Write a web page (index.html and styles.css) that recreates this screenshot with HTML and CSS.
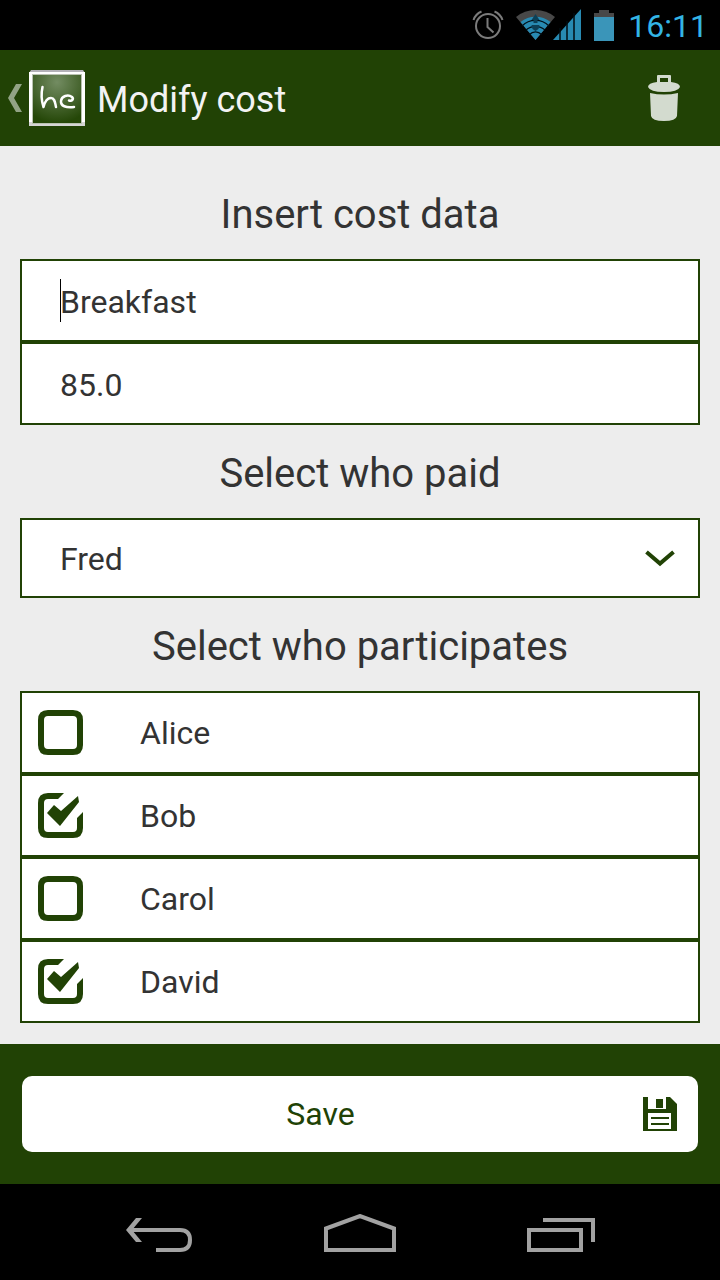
FILE: index.html
```html
<!DOCTYPE html>
<html lang="en">
<head>
<meta charset="utf-8">
<meta name="viewport" content="width=device-width, initial-scale=1">
<title>Modify cost</title>
<link rel="stylesheet" href="styles.css">
</head>
<body>
<div class="status-bar">
  <svg class="alarm-icon" width="34" height="34" viewBox="0 0 34 34" fill="none" stroke="#7b7b7b" stroke-width="2" aria-hidden="true">
    <circle cx="16" cy="18" r="12"/>
    <path d="M15.500 10v9l6 5.500M1.500 12Q3.500 6 9.500 3.500M30.500 12Q28.500 6 22.500 3.500"/>
  </svg>
  <svg class="signal-icons" width="66" height="34" viewBox="0 0 66 34" aria-hidden="true">
    <path d="M0 9A31 31 0 0 1 39 9L19.500 32Z" fill="#484848"/>
    <path d="M4.500 14A24 24 0 0 1 34.500 14L19.500 32Z" fill="#288ab2"/>
    <path d="M6 18A19 19 0 0 1 33 18M10 22A14 14 0 0 1 29 22M13.500 26.500A8 8 0 0 1 25.500 26.500" fill="none" stroke="#001019" stroke-width="1.200"/>
    <path d="M19.500 6l4 6h-2v3h-4v-3h-2zM15.500 17h8l-1 4-3 2-3-2z" fill="#0c4057"/>
    <path d="M37 32L65 1V32Z" fill="#288ab2"/>
    <path d="M44 20V32M51 13V32M58 5V32" stroke="#000c12" stroke-width="1.500"/>
  </svg>
  <svg class="battery-icon" width="20" height="31" viewBox="0 0 20 31" aria-hidden="true">
    <path d="M5 0H15V3H20V7H0V3H5Z" fill="#484848"/>
    <path d="M0 7H20V31H0Z" fill="#3a95b9"/>
  </svg>
  <time class="clock">16:11</time>
</div>

<header class="action-bar">
  <a class="up-link" href="#" aria-label="Back">
    <svg width="14" height="28" viewBox="0 0 14 28" aria-hidden="true"><path d="M8 0H14L6 14L14 28H8L0 14Z" fill="#92a385"/></svg>
    <svg class="logo" width="56" height="56" viewBox="0 0 56 56" aria-hidden="true">
      <defs>
        <radialGradient id="logo-glow" cx="50%" cy="15%" r="85%">
          <stop offset="0" stop-color="#738c62"/>
          <stop offset="1" stop-color="#254708"/>
        </radialGradient>
      </defs>
      <path d="M2 0H54L56 3V56H0V3Z" fill="#b4b2b8"/>
      <path d="M0 2H56V53H0Z" fill="#fff"/>
      <path d="M0 52H56V56H0Z" fill="#d5d5d5"/>
      <path d="M3 4H53V54H3Z" fill="#b9c2b1"/>
      <path d="M4 5H52V53H4Z" fill="url(#logo-glow)"/>
      <path d="M13.500 17C12 24 12.500 31 14.500 37C16 31 19 28 22 28C26 28 26 33 27 37M40 30.500C43 31.500 45 29 43 27C39 24 32.500 26 32 31C31.500 36 37 38 45 37" fill="none" stroke="#fff" stroke-width="2.500" stroke-linecap="round" stroke-linejoin="round"/>
    </svg>
  </a>
  <h1 class="title">Modify cost</h1>
  <button class="icon-button" type="button" aria-label="Delete">
    <svg width="32" height="46" viewBox="0 0 32 46" fill="#d3dbcf" aria-hidden="true">
      <path fill-rule="evenodd" d="M10 0H22Q23 0 23 1V7Q32 8 32 12Q30 17 16 17Q2 17 0 12Q0 8 9 7V1Q9 0 10 0ZM12 3V7H20V3Z"/>
      <path d="M2 18Q16 21 30 18L29 41Q28 46 16 46Q4 46 3 41Z"/>
    </svg>
  </button>
</header>

<form class="cost-form" id="cost-form">
  <h2 class="section-title">Insert cost data</h2>
  <div class="field-group">
    <div class="caret-field">
      <input class="field" type="text" value="Breakfast" aria-label="Cost name">
      <span class="caret"></span>
    </div>
    <input class="field" type="text" inputmode="decimal" value="85.0" aria-label="Amount">
  </div>

  <h2 class="section-title"><label for="payer">Select who paid</label></h2>
  <div class="select-wrap">
    <select class="payer" id="payer">
      <option>Fred</option>
    </select>
    <svg class="chevron" width="30" height="17" viewBox="0 0 30 17" fill="none" stroke="#214205" stroke-width="4" aria-hidden="true"><path d="M1.500 2L15 13.500L28.500 2"/></svg>
  </div>

  <h2 class="section-title">Select who participates</h2>
  <div class="people">
    <label class="person">
      <span class="tick"><input class="tick-input" type="checkbox"><svg class="tick-mark" viewBox="0 0 45 45" aria-hidden="true"><path class="tick-empty" d="M10 3H35Q42 3 42 10V35Q42 42 35 42H10Q3 42 3 35V10Q3 3 10 3Z"/><path class="tick-full" d="M0 10Q0 0 10 0H26L20 6H10Q6 6 6 10V35Q6 39 10 39H35Q39 39 39 35V25L45 19V35Q45 45 35 45H10Q0 45 0 35ZM9 20L16 12L23 18L40 3L41 9L22 33Z"/></svg></span>
      <span>Alice</span>
    </label>
    <label class="person">
      <span class="tick"><input class="tick-input" type="checkbox" checked><svg class="tick-mark" viewBox="0 0 45 45" aria-hidden="true"><path class="tick-empty" d="M10 3H35Q42 3 42 10V35Q42 42 35 42H10Q3 42 3 35V10Q3 3 10 3Z"/><path class="tick-full" d="M0 10Q0 0 10 0H26L20 6H10Q6 6 6 10V35Q6 39 10 39H35Q39 39 39 35V25L45 19V35Q45 45 35 45H10Q0 45 0 35ZM9 20L16 12L23 18L40 3L41 9L22 33Z"/></svg></span>
      <span>Bob</span>
    </label>
    <label class="person">
      <span class="tick"><input class="tick-input" type="checkbox"><svg class="tick-mark" viewBox="0 0 45 45" aria-hidden="true"><path class="tick-empty" d="M10 3H35Q42 3 42 10V35Q42 42 35 42H10Q3 42 3 35V10Q3 3 10 3Z"/><path class="tick-full" d="M0 10Q0 0 10 0H26L20 6H10Q6 6 6 10V35Q6 39 10 39H35Q39 39 39 35V25L45 19V35Q45 45 35 45H10Q0 45 0 35ZM9 20L16 12L23 18L40 3L41 9L22 33Z"/></svg></span>
      <span>Carol</span>
    </label>
    <label class="person">
      <span class="tick"><input class="tick-input" type="checkbox" checked><svg class="tick-mark" viewBox="0 0 45 45" aria-hidden="true"><path class="tick-empty" d="M10 3H35Q42 3 42 10V35Q42 42 35 42H10Q3 42 3 35V10Q3 3 10 3Z"/><path class="tick-full" d="M0 10Q0 0 10 0H26L20 6H10Q6 6 6 10V35Q6 39 10 39H35Q39 39 39 35V25L45 19V35Q45 45 35 45H10Q0 45 0 35ZM9 20L16 12L23 18L40 3L41 9L22 33Z"/></svg></span>
      <span>David</span>
    </label>
  </div>
</form>

<footer class="save-bar">
  <button class="save-button" type="submit" form="cost-form">
    <span class="save-text">Save</span>
    <svg width="34" height="34" viewBox="0 0 34 34" aria-hidden="true">
      <path d="M0 0H27L34 7V34H0Z" fill="#214205"/>
      <path d="M5 0H23V12H5ZM5 16H28V32H5Z" fill="#fff"/>
      <path d="M13 2H20V11H13ZM8 20H26V22H8ZM8 26H26V28H8Z" fill="#214205"/>
    </svg>
  </button>
</footer>

<nav class="nav-bar" aria-label="System">
  <button class="nav-button" type="button" aria-label="Back">
    <svg width="66" height="36" viewBox="0 0 66 36" fill="none" stroke="#a2a2a2" stroke-width="4" aria-hidden="true"><path d="M4 14H54Q64 14 64 24Q64 34 54 34H30"/><path d="M10 2H16L6 14L16 26H10L0 14Z" fill="#a2a2a2" stroke="none"/></svg>
  </button>
  <button class="nav-button" type="button" aria-label="Home">
    <svg width="72" height="38" viewBox="0 0 72 38" fill="none" stroke="#a2a2a2" stroke-width="4" aria-hidden="true"><path d="M2 36V14.500L36 2L70 14.500V36Z"/></svg>
  </button>
  <button class="nav-button" type="button" aria-label="Recent apps">
    <svg width="68" height="34" viewBox="0 0 68 34" fill="none" stroke="#a2a2a2" stroke-width="4" aria-hidden="true"><path d="M2 12H54V32H2ZM16 2H66V24"/></svg>
  </button>
</nav>
</body>
</html>
```
FILE: styles.css
```css
* {
  box-sizing: border-box;
}

body {
  margin: 0;
  min-height: 100vh;
  display: flex;
  flex-direction: column;
  background: #ededed;
  color: #333;
  font-family: Roboto, "Noto Sans", sans-serif;
  font-size: 32px;
}

svg {
  display: block;
  flex: none;
}

button,
input,
select {
  font: inherit;
  color: inherit;
  margin: 0;
}

.status-bar {
  height: 50px;
  display: flex;
  align-items: center;
  justify-content: flex-end;
  padding-right: 12px;
  background: #000;
  color: #33b5e5;
}

.signal-icons {
  margin: 0 12px 0 10px;
}

.clock {
  padding-top: 2px;
  margin-left: 14px;
}

.action-bar {
  height: 96px;
  display: flex;
  align-items: center;
  padding: 0 40px 0 8px;
  background: #214205;
  color: #f3f3f3;
}

.up-link {
  display: flex;
  align-items: center;
  gap: 7px;
}

.title {
  flex: 1;
  margin: 0 0 0 12px;
  padding-top: 4px;
  font-size: 36px;
  font-weight: 400;
  line-height: 48px;
}

.icon-button,
.nav-button {
  padding: 0;
  border: 0;
  background: none;
}

.cost-form {
  flex: 1;
  padding: 20px 20px 20px;
}

.section-title {
  margin: 0;
  padding: 25px 0 20px;
  font-size: 40px;
  font-weight: 400;
  line-height: 48px;
  text-align: center;
}

.field-group,
.people {
  display: flex;
  flex-direction: column;
}

.field {
  display: block;
  width: 100%;
  height: 83px;
  padding: 2px 38px 0;
  border: 2px solid #214205;
  border-radius: 0;
  background: #fff;
  outline: 0;
}

.caret-field,
.select-wrap {
  position: relative;
}

.caret {
  position: absolute;
  left: 40px;
  top: 20px;
  width: 1px;
  height: 43px;
  background: #000;
}

.payer {
  display: block;
  width: 100%;
  height: 80px;
  padding: 2px 80px 0 38px;
  border: 2px solid #214205;
  border-radius: 0;
  background: #fff;
  appearance: none;
}

.chevron {
  position: absolute;
  right: 25px;
  top: 32px;
  pointer-events: none;
}

.person {
  height: 83px;
  display: flex;
  align-items: center;
  gap: 57px;
  padding: 0 16px;
  border: 2px solid #214205;
  background: #fff;
}

.tick {
  display: grid;
  width: 45px;
  height: 45px;
}

.tick-input,
.tick-mark {
  grid-area: 1 / 1;
  width: 45px;
  height: 45px;
}

.tick-input {
  appearance: none;
}

.tick-mark {
  pointer-events: none;
}

.tick-empty {
  fill: none;
  stroke: #214205;
  stroke-width: 6;
}

.tick-full {
  display: none;
  fill: #214205;
}

.tick-input:checked + .tick-mark .tick-empty {
  display: none;
}

.tick-input:checked + .tick-mark .tick-full {
  display: inline;
}

.save-bar {
  padding: 32px 22px;
  background: #214205;
}

.save-button {
  width: 100%;
  height: 76px;
  display: flex;
  align-items: center;
  gap: 24px;
  padding: 0 21px 0 0;
  border: 0;
  border-radius: 10px;
  background: #fff;
  color: #214205;
}

.save-text {
  flex: 1;
  text-align: center;
}

.nav-bar {
  height: 96px;
  display: grid;
  grid-template-columns: repeat(3, 1fr);
  padding: 0 58px 28px;
  background: #000;
}

.nav-button {
  display: flex;
  align-items: flex-end;
  justify-content: center;
}
```
